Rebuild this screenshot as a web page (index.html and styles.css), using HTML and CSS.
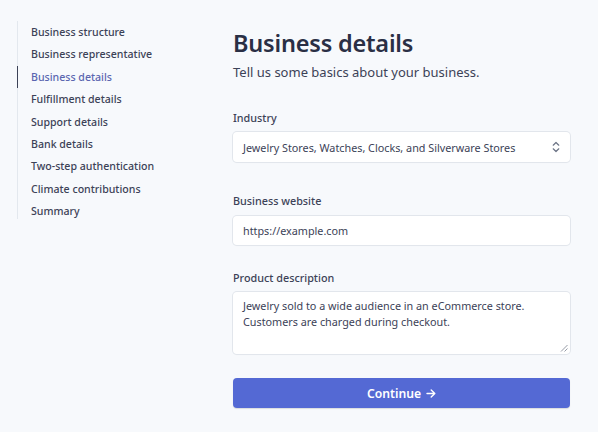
FILE: index.html
```html
<!DOCTYPE html>
<html lang="en">
<head>
<meta charset="utf-8">
<title>Business details</title>
<link rel="stylesheet" href="styles.css">
</head>
<body>
<div class="page">
  <nav class="steps">
    <a class="step">Business structure</a>
    <a class="step">Business representative</a>
    <a class="step active">Business details</a>
    <a class="step">Fulfillment details</a>
    <a class="step">Support details</a>
    <a class="step">Bank details</a>
    <a class="step">Two-step authentication</a>
    <a class="step">Climate contributions</a>
    <a class="step">Summary</a>
  </nav>
  <main class="form">
    <h1 class="title">Business details</h1>
    <p class="subtitle">Tell us some basics about your business.</p>

    <div class="field f-industry">
      <label class="label">Industry</label>
      <div class="control select">
        <span class="value">Jewelry Stores, Watches, Clocks, and Silverware Stores</span>
        <svg class="chev" width="8" height="12" viewBox="0 0 8 12"><path d="M1.2 4.2 L4 1.5 L6.8 4.2 M1.2 7.8 L4 10.5 L6.8 7.8" fill="none" stroke="#6b7385" stroke-width="1.2" stroke-linecap="round" stroke-linejoin="round"/></svg>
      </div>
    </div>

    <div class="field f-website">
      <label class="label">Business website</label>
      <div class="control input"><span class="value">https://example.com</span></div>
    </div>

    <div class="field f-desc">
      <label class="label">Product description</label>
      <div class="control textarea">
        <span class="value">Jewelry sold to a wide audience in an eCommerce store.<br>Customers are charged during checkout.</span>
        <svg class="grip" width="8" height="8" viewBox="0 0 8 8"><path d="M7.5 1 L1 7.5 M7.5 4.5 L4.5 7.5" stroke="#8a909c" stroke-width="0.9"/></svg>
      </div>
    </div>

    <button class="continue">Continue <svg class="arrow" width="10" height="9" viewBox="0 0 10 9"><path d="M1 4.5 H8.6 M5.2 1 L8.8 4.5 L5.2 8" fill="none" stroke="#ffffff" stroke-width="1.4" stroke-linecap="round" stroke-linejoin="round"/></svg></button>
  </main>
</div>
</body>
</html>
```

FILE: styles.css
```css
* { box-sizing: border-box; }
html, body { margin: 0; padding: 0; }
body {
  background: #f7f9fc;
  font-family: "Noto Sans", "Open Sans", sans-serif;
  color: #3c4257;
  width: 598px;
  height: 432px;
  overflow: hidden;
}
.page {
  display: flex;
  align-items: flex-start;
}
.steps {
  display: flex;
  flex-direction: column;
  margin-left: 17px;
  margin-top: 21px;
  border-left: 1px solid #e3e8ee;
  width: 199px;
}
.step {
  display: block;
  height: 22.4px;
  line-height: 22px;
  padding-left: 13px;
  font-size: 10.6px;
  font-weight: 500;
  color: #3c4257;
  white-space: nowrap;
}
.step:last-child { height: 19px; }
.step.active {
  color: #5a66b0;
  margin-left: -1px;
  padding-left: 13px;
  border-left: 1px solid #3c4257;
}
.form {
  width: 337px;
  margin-left: 17px;
  padding-top: 28px;
  display: flex;
  flex-direction: column;
}
.title {
  margin: 0;
  font-size: 23.5px;
  line-height: 30px;
  font-weight: 600;
  color: #2a2f45;
  letter-spacing: -0.2px;
}
.subtitle {
  margin: 4px 0 0;
  font-size: 13px;
  line-height: 20px;
  color: #3c4257;
}
.field {
  display: flex;
  flex-direction: column;
  gap: 6px;
}
.f-industry { margin-top: 28px; }
.f-website { margin-top: 31px; gap: 7px; }
.f-desc { margin-top: 25px; }
.label {
  font-size: 10.8px;
  line-height: 16px;
  font-weight: 500;
  color: #3c4257;
}
.control {
  position: relative;
  background: #ffffff;
  border-radius: 4px;
  box-shadow: 0 0 0 1px #e2e6ec, 0 1px 1px rgba(0,0,0,0.05);
  font-size: 10.8px;
  color: #3c4257;
  padding: 0 10px;
}
.select {
  height: 30px;
  display: flex;
  align-items: center;
  justify-content: space-between;
}
.input {
  height: 29px;
  display: flex;
  align-items: center;
}
.textarea {
  height: 62px;
  padding-top: 6px;
  line-height: 16px;
}
.grip {
  position: absolute;
  right: 2px;
  bottom: 2px;
}
.continue {
  margin-top: 24px;
  height: 30px;
  width: 337px;
  border: 0;
  border-radius: 4px;
  background: #5469d4;
  color: #ffffff;
  font-family: inherit;
  font-size: 12.2px;
  font-weight: 600;
  box-shadow: 0 1px 1px rgba(0,0,0,0.12);
  display: flex;
  align-items: center;
  justify-content: center;
  gap: 5px;
  padding: 0;
}
.arrow { display: block; }
```
